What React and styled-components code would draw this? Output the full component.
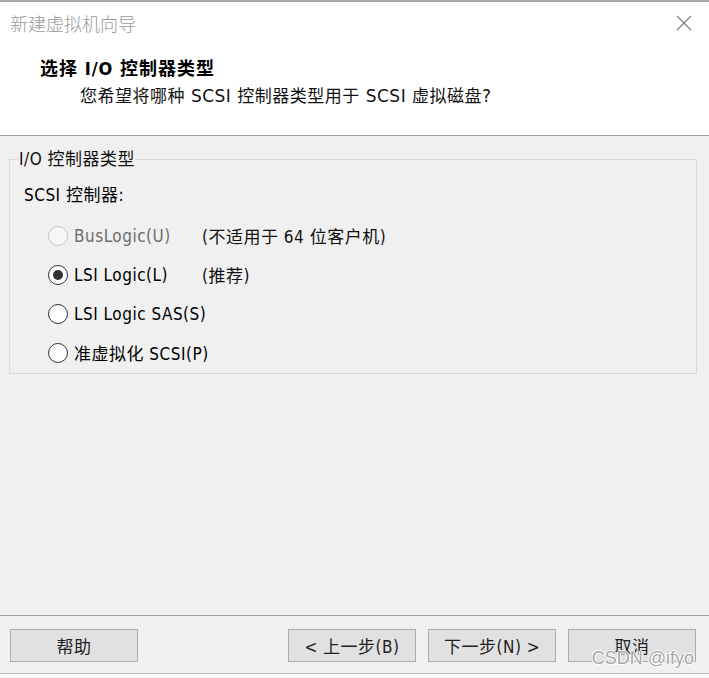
import React from "react";
import styled, { createGlobalStyle } from "styled-components";

const GlobalStyle = createGlobalStyle`
  html, body {
    margin: 0;
    padding: 0;
    background: #fbfbfb;
  }
  body {
    font-family: "DejaVu Sans Condensed", "DejaVu Sans", "Noto Sans CJK SC", sans-serif;
    font-size: 17px;
    letter-spacing: 0.5px;
    color: #000;
  }
`;

const Window = styled.div`
  position: relative;
  box-sizing: border-box;
  width: 709px;
  height: 674px;
  display: flex;
  flex-direction: column;
  background: #f0f0f0;
  border-top: 2px solid #a8a8a8;
  border-bottom: 1px solid #bcbcbc;
  box-shadow: 0 1px 2px rgba(0, 0, 0, 0.08);
`;

const Header = styled.div`
  height: 133px;
  background: #fff;
  border-bottom: 1px solid #a0a0a0;
`;

const TitleBar = styled.div`
  display: flex;
  justify-content: space-between;
  align-items: center;
  height: 42px;
  padding: 0 17px 0 10px;
`;

const Title = styled.span`
  font-family: "Noto Sans CJK SC", sans-serif;
  font-size: 18px;
  font-weight: 300;
  letter-spacing: 0;
  color: #9a9a9a;
`;

const Heading = styled.div`
  margin: 14px 0 0 40px;
  line-height: 22px;
  font-weight: 700;
  font-size: 18px;
  letter-spacing: 1px;
`;

const SubHeading = styled.div`
  margin: 5px 0 0 80px;
  line-height: 22px;
  font-family: "DejaVu Sans", "Noto Sans CJK SC", sans-serif;
  font-size: 17px;
  color: #111;
`;

const Body = styled.div`
  flex: 1;
  padding: 13px 12px 0 9px;
`;

const Group = styled.fieldset`
  margin: 0;
  padding: 0 0 1px 14px;
  border: 1px solid #d9d9d9;
  min-width: 0;
`;

const Legend = styled.legend`
  margin-left: -6px;
  padding: 0 1px;
  line-height: 20px;
  color: #111;
`;

const FieldLabel = styled.div`
  margin-top: 16px;
  line-height: 20px;
  height: 20px;
`;

const Options = styled.div`
  margin: 11px 0 0 24px;
`;

const Option = styled.label`
  display: grid;
  grid-template-columns: 20px 122px auto;
  column-gap: 6px;
  align-items: center;
  height: 39px;
  white-space: nowrap;
  color: ${(p) => (p.disabled ? "#6d6d6d" : "#000")};
`;

const Radio = styled.span`
  box-sizing: border-box;
  width: 20px;
  height: 20px;
  border-radius: 50%;
  border: 1.5px solid ${(p) => (p.disabled ? "#c4c4c4" : "#333")};
  background: ${(p) => (p.disabled ? "#f7f7f7" : "#fff")};
  display: flex;
  align-items: center;
  justify-content: center;

  &::after {
    content: "";
    width: 10px;
    height: 10px;
    border-radius: 50%;
    background: #333;
    display: ${(p) => (p.checked ? "block" : "none")};
  }
`;

const Note = styled.span`
  color: #111;
`;

const Footer = styled.div`
  display: flex;
  align-items: flex-start;
  gap: 12px;
  height: 58px;
  box-sizing: border-box;
  padding: 13px 13px 0 10px;
  border-top: 1px solid #a0a0a0;
`;

const Button = styled.button`
  box-sizing: border-box;
  width: 128px;
  height: 33px;
  padding: 0;
  background: #e1e1e1;
  border: 1px solid #adadad;
  font-family: "DejaVu Sans Condensed", "DejaVu Sans", "Noto Sans CJK SC", sans-serif;
  font-size: 17px;
  letter-spacing: 0.5px;
  color: #222;
  margin-left: ${(p) => (p.$push ? "auto" : "0")};
`;

const Watermark = styled.div`
  position: absolute;
  right: 15px;
  bottom: 4px;
  font-family: "Liberation Sans", sans-serif;
  font-size: 18px;
  letter-spacing: 0;
  color: #a8a8a8;
  text-shadow: 1px 0 #fff, -1px 0 #fff, 0 1px #fff, 0 -1px #fff;
  pointer-events: none;
`;

const CloseIcon = () => (
  <svg width="16" height="16" viewBox="0 0 16 16">
    <path d="M1 1L15 15M15 1L1 15" stroke="#7a7a7a" strokeWidth="1.1" fill="none" />
  </svg>
);

const options = [
  { label: "BusLogic(U)", note: "(不适用于 64 位客户机)", disabled: true },
  { label: "LSI Logic(L)", note: "(推荐)", checked: true },
  { label: "LSI Logic SAS(S)" },
  { label: "准虚拟化 SCSI(P)" },
];

export default function App() {
  return (
    <>
      <GlobalStyle />
      <Window>
        <Header>
          <TitleBar>
            <Title>新建虚拟机向导</Title>
            <CloseIcon />
          </TitleBar>
          <Heading>选择 I/O 控制器类型</Heading>
          <SubHeading>您希望将哪种 SCSI 控制器类型用于 SCSI 虚拟磁盘?</SubHeading>
        </Header>
        <Body>
          <Group>
            <Legend>I/O 控制器类型</Legend>
            <FieldLabel>SCSI 控制器:</FieldLabel>
            <Options>
              {options.map((o) => (
                <Option key={o.label} disabled={o.disabled}>
                  <Radio disabled={o.disabled} checked={o.checked} />
                  <span>{o.label}</span>
                  {o.note && <Note>{o.note}</Note>}
                </Option>
              ))}
            </Options>
          </Group>
        </Body>
        <Footer>
          <Button>帮助</Button>
          <Button $push>&lt; 上一步(B)</Button>
          <Button>下一步(N) &gt;</Button>
          <Button>取消</Button>
        </Footer>
        <Watermark>CSDN @ifyo</Watermark>
      </Window>
    </>
  );
}
